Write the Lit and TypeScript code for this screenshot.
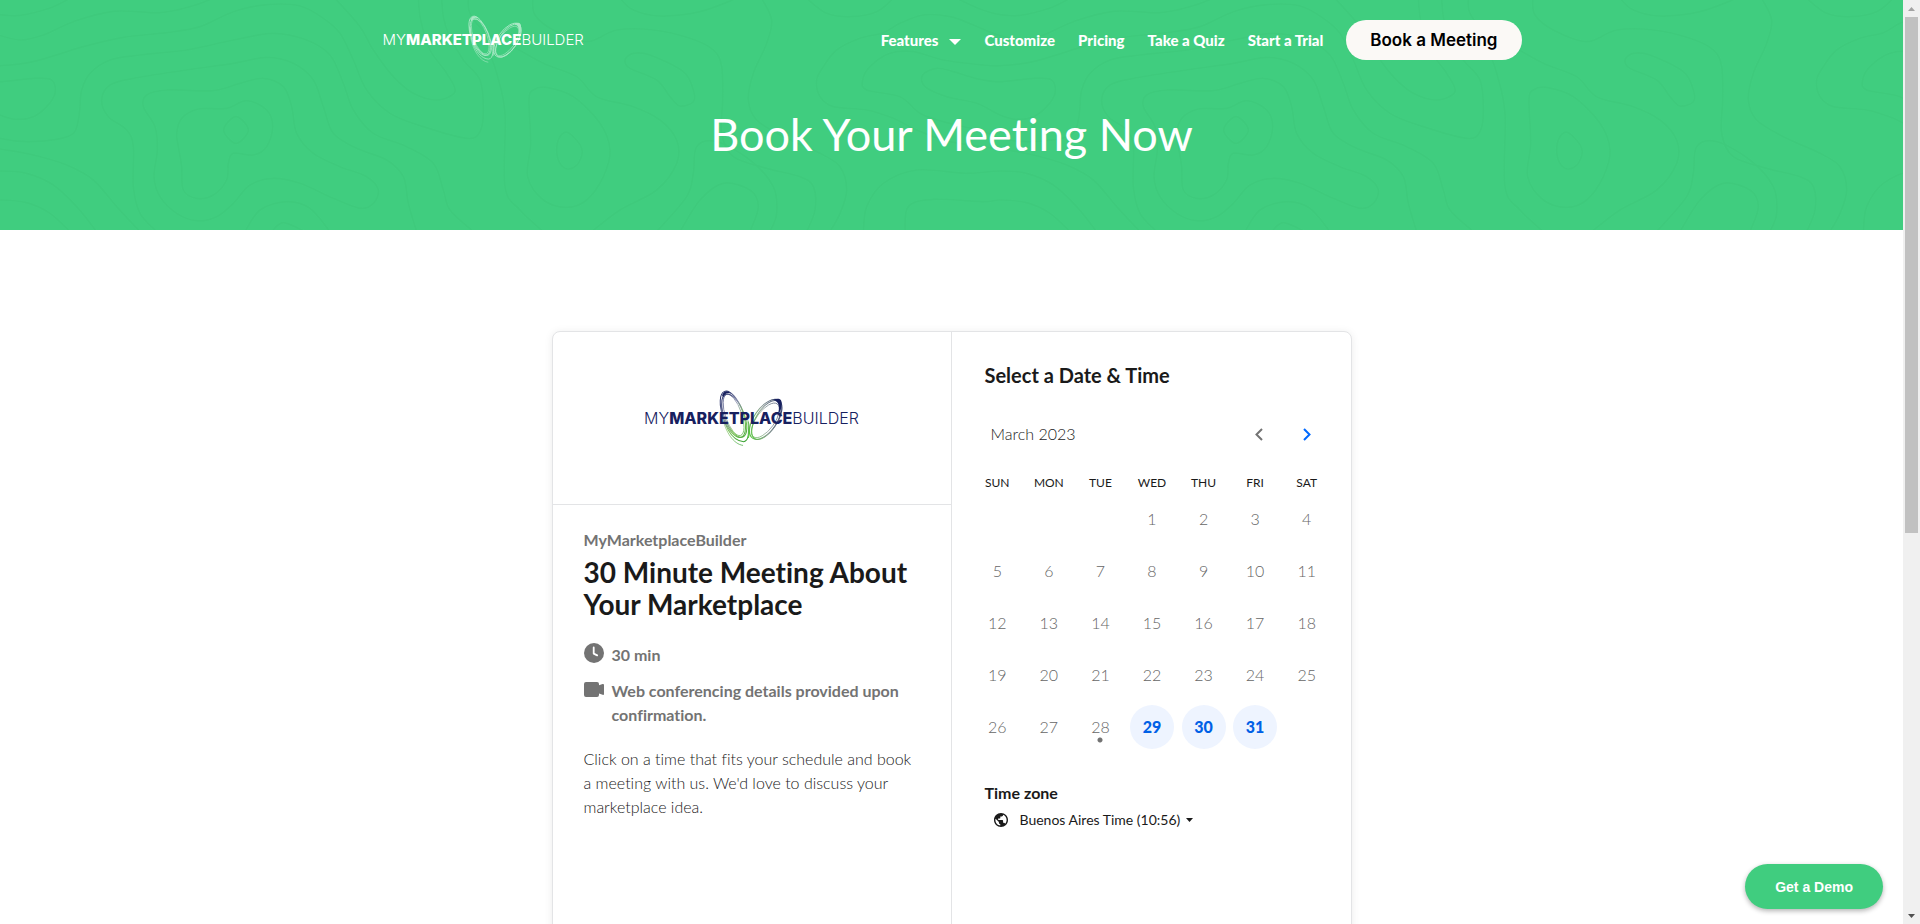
import { LitElement, html, css, svg } from "lit";
import { customElement, property, state } from "lit/decorators.js";
import { classMap } from "lit/directives/class-map.js";

type Point = [number, number];

interface Contour {
  closed?: boolean;
  points: Point[];
}

/* Contour lines of the hero background, in thirds of a pixel; one tile is 3000 wide. */
const CONTOURS: Contour[] = [
  { points: [[2870, -5], [2940, 27], [3000, 44], [3060, 46], [3150, 24], [3210, -5]] },
  { points: [[3640, -5], [3570, 20], [3480, 38], [3340, 34], [3220, 65], [3130, 105], [3060, 120], [2980, 100], [2920, 75], [2850, 50], [2770, 45], [2700, 70], [2650, 98], [2580, 115], [2510, 150], [2470, 200], [2450, 240], [2460, 290], [2500, 320], [2600, 330], [2680, 355], [2750, 390], [2850, 425], [3000, 447], [3100, 465], [3200, 495], [3280, 540], [3350, 620], [3420, 695]] },
  { points: [[1325, -5], [1330, 50], [1345, 100], [1390, 180], [1440, 240], [1450, 330], [1440, 395], [1400, 415], [1270, 380], [1170, 340], [1100, 270], [1060, 180], [1020, 100], [970, 55], [900, 18], [800, 14], [700, 35], [600, 80], [500, 98], [370, 112], [250, 140], [100, 185], [0, 197], [-50, 195], [-170, 180], [-260, 155], [-330, 160], [-390, 200], [-412, 240], [-400, 270], [-300, 290], [-240, 340], [-170, 365], [-50, 395], [0, 415], [80, 425], [170, 418], [220, 400], [235, 360], [240, 320], [245, 270], [270, 220], [330, 180], [420, 165], [560, 150], [700, 120], [820, 100], [920, 120], [990, 165], [1030, 250], [1060, 330], [1120, 400], [1220, 440], [1300, 490], [1330, 570], [1350, 630], [1420, 695]] },
  { points: [[1005, -5], [1080, 80], [1120, 150], [1180, 230], [1240, 280], [1310, 300], [1365, 275], [1340, 220], [1290, 150], [1262, 60], [1255, -5]] },
  { points: [[470, 695], [420, 640], [400, 560], [400, 440], [380, 390], [325, 350], [305, 300], [330, 255], [400, 235], [560, 210], [700, 190], [800, 172], [880, 190], [940, 240], [970, 320], [1000, 400], [1070, 445], [1160, 480], [1210, 530], [1225, 610], [1250, 695]] },
  { closed: true, points: [[430, 320], [440, 285], [500, 270], [640, 272], [720, 250], [790, 235], [850, 260], [875, 320], [890, 400], [940, 460], [1020, 500], [1100, 530], [1135, 570], [1120, 610], [1080, 625], [1000, 595], [900, 550], [820, 535], [750, 555], [700, 610], [650, 650], [590, 662], [530, 640], [480, 590], [462, 530], [472, 450], [465, 380]] },
  { closed: true, points: [[530, 400], [545, 355], [595, 327], [680, 325], [740, 302], [800, 330], [818, 380], [800, 440], [760, 465], [700, 460], [685, 490], [680, 540], [640, 585], [590, 595], [550, 570], [545, 500], [535, 440]] },
  { closed: true, points: [[671, 390], [708, 350], [745, 390], [708, 430]] },
  { closed: true, points: [[3000, 245], [3100, 235], [3155, 240], [3165, 280], [3140, 320], [3100, 350], [3050, 358], [3000, 345], [2930, 310], [2840, 290], [2775, 260], [2768, 225], [2810, 205], [2860, 215], [2930, 236]] },
  { points: [[2590, 695], [2600, 620], [2650, 550], [2750, 510], [2900, 520], [3000, 513], [3080, 520], [3160, 555], [3230, 620], [3290, 695]] },
  { points: [[2715, 695], [2725, 620], [2800, 598], [2950, 605], [3000, 600], [3080, 608], [3150, 640], [3210, 695]] },
  { points: [[735, 695], [780, 630], [860, 605], [930, 625], [990, 695]] },
  { points: [[815, 695], [850, 668], [915, 695]] },
  { points: [[1860, -5], [1900, 30], [1980, 48], [2100, 35], [2210, -5]] },
  { points: [[2285, -5], [2315, 60], [2300, 130], [2260, 220], [2245, 300], [2270, 360], [2350, 410], [2460, 460], [2520, 500], [2540, 570], [2520, 640], [2490, 695]] },
  { points: [[1598, -5], [1605, 45], [1660, 90], [1760, 125], [1850, 90], [1960, 90], [2070, 115], [2140, 150], [2165, 200], [2168, 300], [2165, 400], [2200, 470], [2300, 505], [2400, 530], [2440, 560], [2445, 630], [2420, 695]] },
  { closed: true, points: [[1875, 180], [1900, 160], [1950, 165], [2050, 215], [2080, 270], [2080, 305], [2040, 318], [2010, 290], [1970, 240], [1890, 205]] },
  { closed: true, points: [[1587, 300], [1600, 270], [1640, 262], [1720, 290], [1800, 370], [1830, 450], [1810, 530], [1760, 600], [1700, 622], [1630, 600], [1583, 530], [1592, 430]] },
  { closed: true, points: [[1670, 450], [1680, 410], [1705, 398], [1745, 445], [1735, 490], [1705, 507], [1680, 490]] },
  { points: [[1405, -5], [1410, 40], [1460, 100], [1540, 140], [1630, 190], [1730, 230], [1790, 290], [1900, 320], [1980, 360], [2030, 420], [2030, 490], [1970, 570], [1860, 630], [1775, 695]] },
  { points: [[1465, 150], [1490, 220], [1515, 340], [1515, 560], [1560, 630], [1630, 695]] },
  { points: [[1970, 695], [2060, 590], [2080, 520], [2090, 440], [2150, 425], [2250, 480], [2320, 560], [2330, 640], [2310, 695]] },
  { points: [[2040, 695], [2100, 600], [2170, 550], [2250, 570], [2275, 620], [2250, 695]] },
  { points: [[2420, -5], [2480, 40], [2550, 50], [2630, 35], [2680, -5]] },
];

/* Smooth path through the points (Catmull-Rom turned into cubic Béziers). */
function smoothPath({ points, closed }: Contour): string {
  const n = points.length;
  const at = (i: number): Point =>
    closed ? points[(i + n) % n] : points[Math.max(0, Math.min(n - 1, i))];
  let d = `M${points[0].join(" ")}`;
  for (let i = 0; i < (closed ? n : n - 1); i++) {
    const [p0, p1, p2, p3] = [at(i - 1), at(i), at(i + 1), at(i + 2)];
    d += `C${p1[0] + (p2[0] - p0[0]) / 6} ${p1[1] + (p2[1] - p0[1]) / 6} `;
    d += `${p2[0] - (p3[0] - p1[0]) / 6} ${p2[1] - (p3[1] - p1[1]) / 6} ${p2[0]} ${p2[1]}`;
  }
  return closed ? d + "Z" : d;
}

@customElement("brand-logo")
export class BrandLogo extends LitElement {
  @property({ type: Boolean, reflect: true }) light = false;

  static styles = css`
    :host {
      display: inline-grid;
      align-items: center;
      justify-items: center;
      font-family: Inter, "Liberation Sans", sans-serif;
      font-size: 16px;
      line-height: 20px;
      color: #17205f;
      white-space: nowrap;
    }
    :host([light]) {
      font-size: 15px;
      color: #fff;
    }
    .word,
    .wings {
      grid-area: 1 / 1;
    }
    .word {
      font-weight: 300;
    }
    .word b {
      font-weight: 800;
    }
    .wings {
      width: 66px;
      height: 58px;
    }
    :host([light]) .wings {
      width: 56px;
      height: 50px;
      margin: 0 0 2px 24px;
    }
  `;

  render() {
    const plain = this.light;
    const a = plain ? "#a9e8c5" : "url(#wingL)";
    const b = plain ? "#a9e8c5" : "url(#wingR)";
    const tip = plain ? "#a9e8c5" : "#17205f";
    return html`
      <svg class="wings" viewBox="540 208 195 170" fill="none" aria-hidden="true">
        <defs>
          <linearGradient id="wingL" gradientUnits="userSpaceOnUse" x1="548" y1="225" x2="630" y2="355">
            <stop offset="0" stop-color="#17205f" />
            <stop offset=".35" stop-color="#8288a8" />
            <stop offset=".65" stop-color="#7cc25a" />
            <stop offset="1" stop-color="#35a02e" />
          </linearGradient>
          <linearGradient id="wingR" gradientUnits="userSpaceOnUse" x1="635" y1="345" x2="728" y2="240">
            <stop offset="0" stop-color="#4fc733" />
            <stop offset=".45" stop-color="#8a9a94" />
            <stop offset="1" stop-color="#17205f" />
          </linearGradient>
        </defs>
        <g stroke="${a}" stroke-width="3">
          <ellipse cx="584" cy="282" rx="30" ry="72" transform="rotate(-20 584 282)" />
          <ellipse cx="588" cy="286" rx="29" ry="68" transform="rotate(-22 588 286)" />
          <ellipse cx="586" cy="284" rx="24" ry="64" transform="rotate(-19 586 284)" stroke-width="2" />
          <path d="M549 250C552 310 580 362 616 363C632 360 631 335 629 305" />
          <path d="M553 290C562 335 586 370 614 374" stroke-width="2" />
        </g>
        <g stroke="${b}" stroke-width="3">
          <ellipse cx="681" cy="297" rx="34" ry="68" transform="rotate(35 681 297)" />
          <ellipse cx="683" cy="299" rx="31" ry="65" transform="rotate(32 683 299)" />
          <ellipse cx="680" cy="300" rx="27" ry="60" transform="rotate(36 680 300)" stroke-width="2" />
          <path d="M630 352C636 330 634 315 628 300" />
        </g>
        <path d="M552 226C557 212 570 210 580 222C570 216 562 218 555 232Z" fill="${tip}" />
        <path d="M704 238C720 234 730 236 728 254C727 266 724 274 718 280C722 262 722 246 704 238Z" fill="${tip}" />
      </svg>
      <span class="word">MY<b>MARKETPLACE</b>BUILDER</span>
    `;
  }
}

@customElement("site-header")
export class SiteHeader extends LitElement {
  static styles = css`
    :host {
      display: grid;
      background: #40cd7f;
      color: #fff;
    }
    .contours,
    .content {
      grid-area: 1 / 1;
    }
    .contours {
      width: 100%;
      height: 100%;
      min-height: 0;
    }
    .content {
      width: 100%;
      max-width: 1140px;
      margin: 0 auto;
      padding-bottom: 60px;
      font-family: Lato, sans-serif;
      font-variant-ligatures: none;
    }
    .bar {
      display: flex;
      align-items: center;
      justify-content: space-between;
      height: 80px;
    }
    .home {
      display: flex;
      margin-left: 1px;
      text-decoration: none;
    }
    nav {
      display: flex;
      align-items: center;
      gap: 23px;
    }
    nav a {
      display: flex;
      align-items: center;
      gap: 11px;
      color: #fff;
      font-size: 15px;
      line-height: 20px;
      font-weight: 900;
      text-decoration: none;
      white-space: nowrap;
    }
    .caret {
      width: 12px;
      height: 6px;
      margin-top: 4px;
    }
    nav button {
      height: 40px;
      padding: 0 24px;
      border: 0;
      border-radius: 20px;
      background: #fbf9f6;
      color: #000;
      font: 600 17px/20px Inter, sans-serif;
      white-space: nowrap;
      cursor: pointer;
    }
    h1 {
      margin: 0;
      padding: 26px 0 8px;
      font-size: 45px;
      line-height: 56px;
      font-weight: 400;
      text-align: center;
    }
  `;

  render() {
    const lines = CONTOURS.map((c) => svg`<path d=${smoothPath(c)} />`);
    return html`
      <svg class="contours" aria-hidden="true" height="0">
        <defs>
          <pattern id="tile" width="1000" height="230" patternUnits="userSpaceOnUse">
            <g transform="scale(0.333333)" fill="none" stroke="#3eca7c" stroke-width="5">
              <g>${lines}</g>
              <g transform="translate(-3000 0)">${lines}</g>
              <g transform="translate(3000 0)">${lines}</g>
            </g>
          </pattern>
        </defs>
        <rect width="100%" height="100%" fill="url(#tile)" />
      </svg>
      <div class="content">
        <div class="bar">
          <a class="home" href="#" aria-label="MyMarketplaceBuilder"><brand-logo light></brand-logo></a>
          <nav>
            <a href="#features">Features
              <svg class="caret" viewBox="0 0 12 6" aria-hidden="true"><path d="M0 0H12L6 6Z" fill="currentColor" /></svg>
            </a>
            <a href="#customize">Customize</a>
            <a href="#pricing">Pricing</a>
            <a href="#quiz">Take a Quiz</a>
            <a href="#trial">Start a Trial</a>
            <button type="button">Book a Meeting</button>
          </nav>
        </div>
        <h1>Book Your Meeting Now</h1>
      </div>
    `;
  }
}

@customElement("booking-card")
export class BookingCard extends LitElement {
  @state() private selected = 0;

  static styles = css`
    :host {
      display: grid;
      grid-template-columns: 1fr 1fr;
      box-sizing: border-box;
      width: 100%;
      max-width: 800px;
      min-height: 700px;
      border: 1px solid #e3e4e6;
      border-radius: 8px;
      background: #fff;
      box-shadow: 0 1px 8px rgba(0, 0, 0, 0.08);
      color: #1a1a1a;
      font-family: Lato, sans-serif;
      font-size: 16px;
      font-weight: 300;
      font-variant-ligatures: none;
      line-height: 24px;
    }
    .about {
      border-right: 1px solid #e3e4e6;
    }
    .brand {
      display: flex;
      align-items: center;
      justify-content: center;
      height: 172px;
      border-bottom: 1px solid #e3e4e6;
    }
    .details {
      padding: 23px 28px 24px 31px;
    }
    .details .muted {
      color: #737373;
      font-weight: 700;
    }
    .details p,
    h2,
    h3 {
      margin: 0;
    }
    h2 {
      padding-top: 4px;
      font-size: 28px;
      line-height: 32px;
      font-weight: 700;
    }
    ul {
      display: grid;
      gap: 12px;
      margin: 0;
      padding: 23px 0 20px;
      list-style: none;
    }
    li {
      display: grid;
      grid-template-columns: 20px 1fr;
      gap: 8px;
    }
    li svg {
      width: 20px;
      height: 20px;
      fill: #737373;
    }
    .pick {
      padding: 29px 18px 30px 20px;
    }
    h3 {
      padding: 0 13px;
      font-size: 20px;
      line-height: 28px;
      font-weight: 700;
    }
    .month {
      display: flex;
      align-items: center;
      padding: 23px 4px 19px 19px;
    }
    .month span {
      flex: 1;
    }
    .month button {
      display: grid;
      place-items: center;
      width: 44px;
      height: 44px;
      margin-left: 4px;
      padding: 0;
      border: 0;
      border-radius: 50%;
      background: none;
      color: #0069ff;
    }
    .month button:disabled {
      color: #737373;
    }
    .month svg {
      width: 8px;
      height: 13px;
    }
    table {
      width: 100%;
      border-collapse: collapse;
      table-layout: fixed;
    }
    th {
      height: 16px;
      padding: 0 0 2px;
      font-size: 12px;
      line-height: 16px;
      font-weight: 400;
      text-align: center;
    }
    td {
      height: 52px;
      padding: 0;
      text-align: center;
    }
    .day {
      display: inline-grid;
      place-items: center;
      width: 44px;
      height: 44px;
      padding: 0;
      border: 0;
      border-radius: 50%;
      background: none;
      color: #666;
      font: inherit;
      vertical-align: middle;
    }
    .day.open {
      background: #eef4ff;
      color: #0060e6;
      font-weight: 900;
      cursor: pointer;
    }
    .day.open.chosen {
      background: #0069ff;
      color: #fff;
    }
    .day.today {
      background: radial-gradient(circle at 50% 35px, #737373 0 2px, transparent 3px);
    }
    .zone {
      padding: 28px 13px 0;
    }
    .zone label {
      display: block;
      font-weight: 700;
    }
    .picker {
      display: flex;
      align-items: center;
      padding: 5px 9px;
      line-height: 20px;
    }
    .globe {
      width: 14px;
      height: 14px;
      margin-right: 12px;
    }
    select {
      appearance: none;
      margin: 0;
      padding: 0;
      border: 0;
      background: none;
      color: inherit;
      font: 400 14px/20px Lato, sans-serif;
    }
    .down {
      width: 7px;
      height: 4px;
      margin-left: 4px;
    }
  `;

  private dayCell(day: number) {
    if (day < 1 || day > 31) return html`<td></td>`;
    const open = day >= 29;
    return html`<td>
      <button
        type="button"
        class=${classMap({ day: true, open, today: day === 28, chosen: this.selected === day })}
        ?disabled=${!open}
        @click=${() => (this.selected = day)}
      >${day}</button>
    </td>`;
  }

  render() {
    const names = ["SUN", "MON", "TUE", "WED", "THU", "FRI", "SAT"];
    return html`
      <section class="about">
        <div class="brand"><brand-logo></brand-logo></div>
        <div class="details">
          <p class="muted">MyMarketplaceBuilder</p>
          <h2>30 Minute Meeting About Your Marketplace</h2>
          <ul class="muted">
            <li>
              <svg viewBox="0 0 20 20" aria-hidden="true">
                <circle cx="10" cy="10" r="10" />
                <path d="M9.7 4.5V10.6L13.2 12.4" fill="none" stroke="#fff" stroke-width="1.8" stroke-linecap="round" stroke-linejoin="round" />
              </svg>
              <span>30 min</span>
            </li>
            <li>
              <svg viewBox="0 0 20 20" aria-hidden="true">
                <path d="M2 3H13Q15 3 15 5V6.2L18.6 5Q20 4.7 20 6V15Q20 16.2 18.6 15.8L15 14.6V16Q15 18 13 18H2Q0 18 0 16V5Q0 3 2 3Z" />
              </svg>
              <span>Web conferencing details provided upon confirmation.</span>
            </li>
          </ul>
          <p>Click on a time that fits your schedule and book a meeting with us. We'd love to discuss your marketplace idea.</p>
        </div>
      </section>
      <section class="pick">
        <h3>Select a Date &amp; Time</h3>
        <div class="month">
          <span>March 2023</span>
          <button type="button" disabled aria-label="Previous month">
            <svg viewBox="0 0 8 13" fill="none" stroke="currentColor" stroke-width="2"><path d="M7 1L1.5 6.5L7 12" /></svg>
          </button>
          <button type="button" aria-label="Next month">
            <svg viewBox="0 0 8 13" fill="none" stroke="currentColor" stroke-width="2"><path d="M1 1L6.5 6.5L1 12" /></svg>
          </button>
        </div>
        <table>
          <thead>
            <tr>${names.map((n) => html`<th scope="col">${n}</th>`)}</tr>
          </thead>
          <tbody>
            ${[0, 1, 2, 3, 4].map((w) => html`<tr>${names.map((_, d) => this.dayCell(w * 7 + d - 2))}</tr>`)}
          </tbody>
        </table>
        <div class="zone">
          <label for="zone">Time zone</label>
          <div class="picker">
            <svg class="globe" viewBox="2 2 20 20" aria-hidden="true">
              <path fill="currentColor" d="M12 2C6.48 2 2 6.48 2 12s4.48 10 10 10 10-4.48 10-10S17.52 2 12 2zm-1 17.93c-3.95-.49-7-3.85-7-7.93 0-.62.08-1.21.21-1.79L9 15v1c0 1.1.9 2 2 2v1.93zm6.9-2.54c-.26-.81-1-1.39-1.9-1.39h-1v-3c0-.55-.45-1-1-1H8v-2h2c.55 0 1-.45 1-1V7h2c1.1 0 2-.9 2-2v-.41c2.93 1.19 5 4.06 5 7.41 0 2.08-.8 3.97-2.1 5.39z" />
            </svg>
            <select id="zone">
              <option>Buenos Aires Time (10:56)</option>
            </select>
            <svg class="down" viewBox="0 0 7 4" aria-hidden="true"><path d="M0 0H7L3.5 4Z" fill="currentColor" /></svg>
          </div>
        </div>
      </section>
    `;
  }
}

@customElement("app-root")
export class AppRoot extends LitElement {
  static styles = css`
    :host {
      display: flex;
      position: relative;
      height: 100vh;
      overflow: hidden;
      background: #fff;
    }
    .page {
      flex: 1;
      min-width: 0;
      overflow: hidden;
    }
    main {
      display: flex;
      justify-content: center;
      padding: 101px 20px;
    }
    .demo {
      position: absolute;
      right: 37px;
      bottom: 15px;
      height: 45px;
      padding: 0 30px;
      border: 0;
      border-radius: 23px;
      background: #40cd7f;
      box-shadow: 0 2px 5px rgba(0, 0, 0, 0.3);
      color: #fff;
      font: 700 14px/20px "Liberation Sans", Arial, sans-serif;
      white-space: nowrap;
      cursor: pointer;
    }
    .scroll {
      display: flex;
      flex-direction: column;
      width: 17px;
      background: #f0f0f0;
    }
    .arrow {
      display: grid;
      place-items: center;
      height: 17px;
      color: #505050;
    }
    .arrow.idle {
      color: #a3a3a3;
    }
    .arrow svg {
      width: 7px;
      height: 4px;
    }
    .track {
      flex: 1;
      padding: 0 2px;
    }
    .thumb {
      height: 58%;
      background: #c1c1c1;
    }
  `;

  render() {
    return html`
      <div class="page">
        <site-header></site-header>
        <main><booking-card></booking-card></main>
      </div>
      <button class="demo" type="button">Get a Demo</button>
      <div class="scroll" aria-hidden="true">
        <div class="arrow idle"><svg viewBox="0 0 7 4"><path d="M0 4H7L3.5 0Z" fill="currentColor" /></svg></div>
        <div class="track"><div class="thumb"></div></div>
        <div class="arrow"><svg viewBox="0 0 7 4"><path d="M0 0H7L3.5 4Z" fill="currentColor" /></svg></div>
      </div>
    `;
  }
}
